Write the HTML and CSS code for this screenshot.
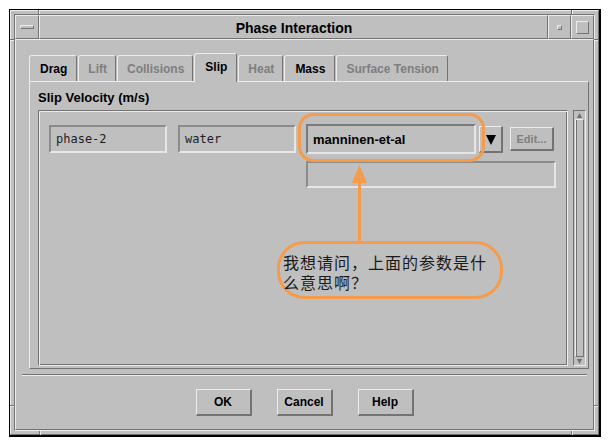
FILE: index.html
```html
<!DOCTYPE html>
<html>
<head>
<meta charset="utf-8">
<title>Phase Interaction</title>
<link rel="stylesheet" href="styles.css">
</head>
<body>
<div class="stage">
  <div class="win">
    <div class="frame">
      <div class="frame-in">
        <div class="titlebar">
          <div class="tb-cell tb-menu"><span class="menu-bar"></span></div>
          <div class="tb-cell tb-title">Phase Interaction</div>
          <div class="tb-cell tb-min"><span class="min-box"></span></div>
          <div class="tb-cell tb-max"><span class="max-box"></span></div>
        </div>
        <div class="client">
          <div class="tabs">
            <div class="tab">Drag</div>
            <div class="tab disabled">Lift</div>
            <div class="tab disabled">Collisions</div>
            <div class="tab selected">Slip</div>
            <div class="tab disabled">Heat</div>
            <div class="tab">Mass</div>
            <div class="tab disabled">Surface Tension</div>
          </div>
          <div class="panel">
            <div class="panel-label">Slip Velocity (m/s)</div>
            <div class="panel-body">
              <div class="group">
                <div class="row1">
                  <div class="field mono f-phase">phase-2</div>
                  <div class="field mono f-water">water</div>
                  <div class="field f-model">manninen-et-al</div>
                  <div class="btn-arrow"><svg width="10" height="10" viewBox="0 0 10 10"><polygon points="0,0 10,0 5,10" fill="#000"/></svg></div>
                  <div class="btn-edit">Edit...</div>
                </div>
                <div class="row2"><div class="field f-empty"></div></div>
              </div>
              <div class="scrollbar">
                <div class="sb-arrow"><svg width="5" height="5" viewBox="0 0 5 5"><polygon points="0,5 5,5 2.5,0" fill="#6e6e6e"/></svg></div>
                <div class="sb-thumb"></div>
                <div class="sb-arrow"><svg width="5" height="5" viewBox="0 0 5 5"><polygon points="0,0 5,0 2.5,5" fill="#6e6e6e"/></svg></div>
              </div>
            </div>
          </div>
          <div class="sep"></div>
          <div class="actions">
            <div class="btn">OK</div>
            <div class="btn">Cancel</div>
            <div class="btn">Help</div>
          </div>
        </div>
      </div>
    </div>
    <span class="mark mv m-tl"></span>
    <span class="mark mh m-lt"></span>
    <span class="mark mv m-tr"></span>
    <span class="mark mh m-rt"></span>
    <span class="mark mv m-bl"></span>
    <span class="mark mh m-lb"></span>
    <span class="mark mv m-br"></span>
    <span class="mark mh m-rb"></span>
  </div>
  <svg class="annot" width="609" height="444" viewBox="0 0 609 444">
    <rect x="299.5" y="114.5" width="184" height="46" rx="14" ry="14" fill="none" stroke="#f59b4c" stroke-width="3"/>
    <line x1="359.5" y1="178" x2="359.5" y2="242" stroke="#f59b4c" stroke-width="3"/>
    <polygon points="352,183 367,183 359.5,165" fill="#f59b4c"/>
    <rect x="278.5" y="242.5" width="223" height="55" rx="26" ry="26" fill="none" stroke="#f59b4c" stroke-width="3"/>
  </svg>
  <div class="bubble-text">我想请问，上面的参数是什么意思啊？</div>
</div>
</body>
</html>
```
FILE: styles.css
```css
* { box-sizing: border-box; }
html, body { margin: 0; padding: 0; background: #ffffff; }
body { font-family: "Liberation Sans", Arial, sans-serif; color: #000; }

.stage { position: relative; width: 609px; height: 444px; overflow: hidden; padding: 9px 0 0 9px; }

.win {
  position: relative;
  width: 592px; height: 428px;
  background: #bfbfbf;
  border-style: solid; border-color: #000;
  border-width: 1px 2px 2px 1px;
}
.frame {
  height: 100%;
  display: flex; flex-direction: column;
  border: 1px solid; border-color: #ececec #737373 #737373 #ececec;
  padding: 3px;
}
.frame-in {
  flex: 1;
  display: flex; flex-direction: column;
  border: 1px solid; border-color: #737373 #ececec #ececec #737373;
}

.titlebar { display: flex; height: 24px; }
.tb-cell {
  border: 1px solid; border-color: #ececec #737373 #737373 #ececec;
  display: flex; align-items: center; justify-content: center;
}
.tb-menu { width: 24px; }
.tb-title { flex: 1; font-weight: bold; font-size: 14px; padding: 1px 0 0 1px; }
.tb-min { width: 23px; }
.tb-max { width: 23px; }
.menu-bar { width: 14px; height: 4px; border: 1px solid; border-color: #ececec #737373 #737373 #ececec; }
.min-box { width: 5px; height: 5px; border: 1px solid; border-color: #ececec #737373 #737373 #ececec; }
.max-box { width: 13px; height: 13px; border: 1px solid; border-color: #ececec #737373 #737373 #ececec; }

.client {
  flex: 1;
  display: flex; flex-direction: column;
  border: 1px solid; border-color: #ececec #737373 #737373 #ececec;
}

.tabs {
  display: flex; align-items: flex-end; gap: 1px;
  height: 28px; margin: 13px 0 0 13px;
}
.tab {
  height: 26px; padding: 0 9px 0 10px;
  display: flex; align-items: center;
  font-weight: bold; font-size: 12px;
  border-style: solid; border-width: 1px 1px 0 1px;
  border-color: #ececec #737373 #737373 #ececec;
  border-radius: 3px 3px 0 0;
  background: #bfbfbf;
}
.tab.disabled { color: #7e7e7e; padding: 0 8px 0 9px; }
.tab.selected {
  height: 29px; margin-bottom: -1px;
  position: relative; z-index: 2;
  padding-bottom: 2px;
}

.panel {
  width: 560px; height: 288px; margin-left: 13px;
  border: 1px solid; border-color: #ececec #737373 #737373 #ececec;
  padding: 8px 2px 2px 8px;
}
.panel-label { font-weight: bold; font-size: 13px; line-height: 16px; height: 16px; margin-bottom: 4px; }
.panel-body { display: flex; gap: 5px; height: 256px; }

.group {
  width: 530px; height: 256px;
  border: 1px solid; border-color: #737373 #ececec #ececec #737373;
  box-shadow: inset 1px 1px 0 #ececec, inset -1px -1px 0 #737373;
  padding: 13px 0 0 10px;
}
.row1 { display: flex; align-items: center; height: 30px; }
.row2 { margin-top: 7px; padding-left: 257px; }

.field {
  border: 2px solid; border-color: #8c8c8c #e6e6e6 #e6e6e6 #8c8c8c;
  display: flex; align-items: center; padding-left: 5px;
}
.mono { font-family: "DejaVu Sans Mono", "Liberation Mono", monospace; font-size: 12px; color: #1e1e1e; }
.f-phase { width: 118px; height: 28px; margin-right: 11px; }
.f-water { width: 118px; height: 28px; margin-right: 10px; }
.f-model {
  width: 170px; height: 30px; margin-right: 3px;
  font-weight: bold; font-size: 13px;
  border-color: #7a7a7a #e6e6e6 #e6e6e6 #7a7a7a;
}
.f-empty { width: 250px; height: 27px; }

.btn-arrow {
  width: 24px; height: 27px; margin-right: 7px;
  border-style: solid; border-width: 1px 2px 2px 1px;
  border-color: #ececec #737373 #737373 #ececec;
  display: flex; align-items: center; justify-content: center;
  padding: 2px 0 0 1px;
}
.btn-edit {
  width: 44px; height: 24px;
  border-style: solid; border-width: 1px 2px 2px 1px;
  border-color: #ececec #737373 #737373 #ececec;
  display: flex; align-items: center; justify-content: center;
  font-weight: bold; font-size: 11px; color: #7e7e7e;
}

.scrollbar {
  width: 13px; height: 256px;
  border: 1px solid; border-color: #737373 #ececec #ececec #737373;
  display: flex; flex-direction: column; align-items: stretch;
}
.sb-arrow { height: 8px; display: flex; align-items: center; justify-content: center; }
.sb-thumb {
  flex: 1; margin: 0 1px;
  border: 1px solid; border-color: #ececec #737373 #737373 #ececec;
  box-shadow: inset 1px 0 0 #737373;
}

.sep {
  height: 2px; margin: 5px 6px 0 6px;
  border-top: 1px solid #737373; border-bottom: 1px solid #ececec;
}
.actions { display: flex; justify-content: center; gap: 25px; margin-top: 13px; }
.btn {
  width: 56px; height: 27px;
  border-style: solid; border-width: 1px 2px 2px 1px;
  border-color: #ececec #737373 #737373 #ececec;
  display: flex; align-items: center; justify-content: center;
  font-weight: bold; font-size: 12px;
}

.mark { position: absolute; }
.mv { width: 1px; height: 4px; background: #737373; box-shadow: 1px 0 0 #ececec; }
.mh { width: 4px; height: 1px; background: #737373; box-shadow: 0 1px 0 #ececec; }
.m-tl { left: 28px; top: 0; }
.m-tr { left: 561px; top: 0; }
.m-bl { left: 29px; top: 421px; }
.m-br { left: 561px; top: 421px; }
.m-lt { left: 0; top: 29px; }
.m-rt { left: 584px; top: 29px; }
.m-lb { left: 0; top: 395px; }
.m-rb { left: 584px; top: 395px; }

.annot { position: absolute; left: 0; top: 0; pointer-events: none; }
.bubble-text {
  position: absolute; left: 283px; top: 252px; width: 208px;
  font-family: "Noto Sans CJK SC", "Noto Sans CJK JP", sans-serif;
  font-size: 16px; line-height: 20px; letter-spacing: 1px;
  color: #1a1a1a;
}
```
